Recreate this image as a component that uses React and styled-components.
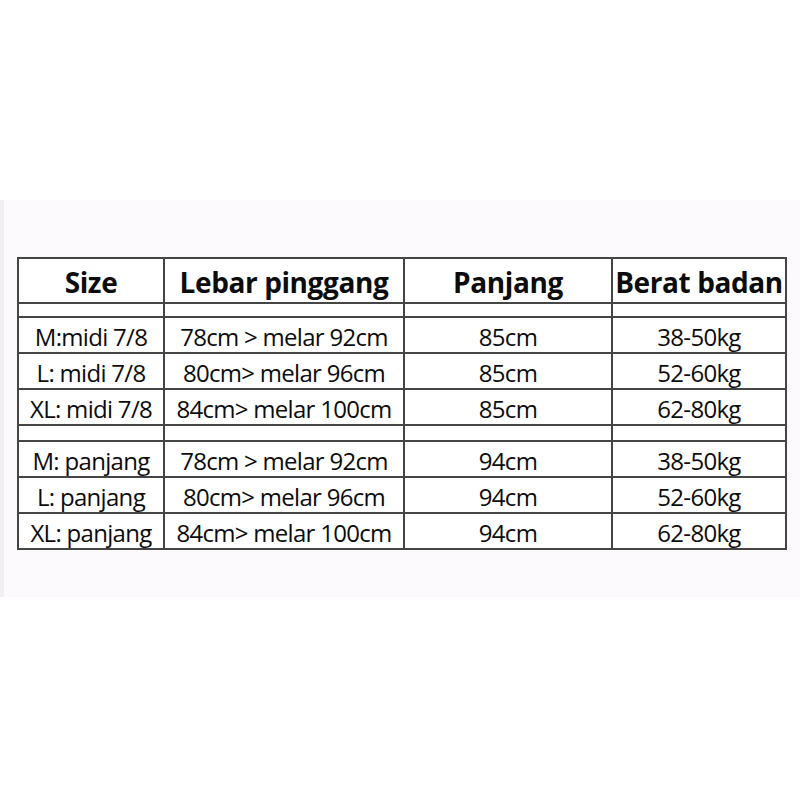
import React from "react";
import styled, { createGlobalStyle } from "styled-components";

const GlobalStyle = createGlobalStyle`
  html, body {
    margin: 0;
    padding: 0;
    background: #ffffff;
  }
`;

const Page = styled.div`
  width: 800px;
  height: 800px;
  padding-top: 200px;
  box-sizing: border-box;
  background: #ffffff;
`;

const Band = styled.div`
  height: 397px;
  box-sizing: border-box;
  padding: 57px 0 0 13px;
  background: #fcfafc;
  border-left: 4px solid #f1eff1;
`;

const Table = styled.table`
  border-collapse: collapse;
  table-layout: fixed;
  font-family: "Open Sans", "Liberation Sans", sans-serif;
  color: #0c0c0c;
  background: #ffffff;
`;

const Cell = styled.td`
  border: 2px solid #454545;
  padding: 0;
  text-align: center;
  vertical-align: middle;
  white-space: nowrap;
  overflow: hidden;
  font-size: 24px;
  letter-spacing: -0.7px;
  line-height: 1;
  padding-top: 4px;
`;

const HeadCell = styled(Cell)`
  font-weight: 700;
  font-size: 28px;
  letter-spacing: -0.4px;
  padding-top: 2px;
`;

const Row = styled.tr`
  height: ${(p) => p.$h}px;
`;

const cols = [146, 240, 208, 174];

const groups = [
  [
    ["M:midi 7/8", "78cm > melar 92cm", "85cm", "38-50kg"],
    ["L: midi 7/8", "80cm> melar 96cm", "85cm", "52-60kg"],
    ["XL: midi 7/8", "84cm> melar 100cm", "85cm", "62-80kg"],
  ],
  [
    ["M: panjang", "78cm > melar 92cm", "94cm", "38-50kg"],
    ["L: panjang", "80cm> melar 96cm", "94cm", "52-60kg"],
    ["XL: panjang", "84cm> melar 100cm", "94cm", "62-80kg"],
  ],
];

export default function App() {
  return (
    <>
      <GlobalStyle />
      <Page>
        <Band>
          <Table>
            <colgroup>
              {cols.map((w, i) => (
                <col key={i} style={{ width: w }} />
              ))}
            </colgroup>
            <tbody>
              <Row $h={45}>
                <HeadCell>Size</HeadCell>
                <HeadCell>Lebar pinggang</HeadCell>
                <HeadCell>Panjang</HeadCell>
                <HeadCell>Berat badan</HeadCell>
              </Row>
              {groups.map((g, gi) => (
                <React.Fragment key={gi}>
                  <Row $h={gi === 0 ? 14 : 16}>
                    <Cell />
                    <Cell />
                    <Cell />
                    <Cell />
                  </Row>
                  {g.map((r, ri) => (
                    <Row key={ri} $h={36}>
                      {r.map((t, ci) => (
                        <Cell key={ci}>{t}</Cell>
                      ))}
                    </Row>
                  ))}
                </React.Fragment>
              ))}
            </tbody>
          </Table>
        </Band>
      </Page>
    </>
  );
}
